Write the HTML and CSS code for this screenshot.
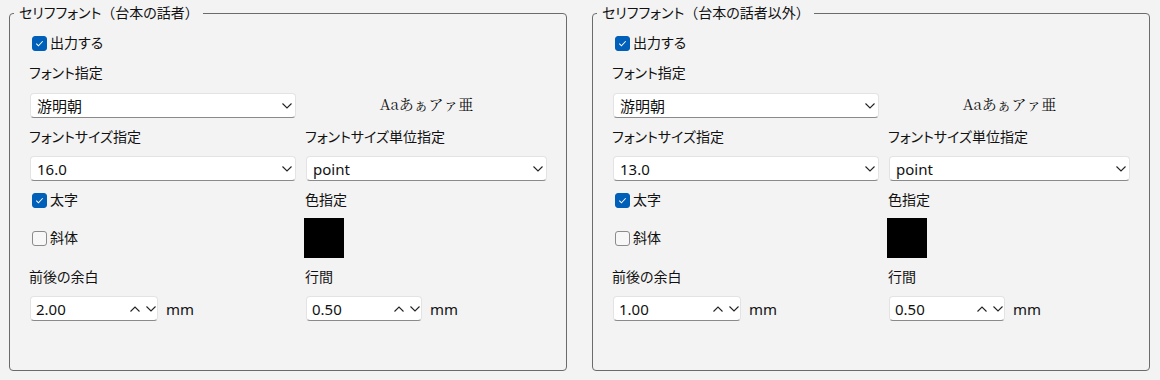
FILE: index.html
```html
<!DOCTYPE html>
<html lang="ja">
<head>
    <meta charset="UTF-8">
    <title>セリフフォント設定</title>
    <link rel="stylesheet" href="styles.css">
</head>
<body>
<div class="page">
    <fieldset class="group">
        <legend>セリフフォント<span class="fw">（</span>台本の話者<span class="fw">）</span></legend>
        <div class="form">
            <label class="check full"><span class="box on"><svg viewBox="0 0 15 15"><path d="M3.8 7.6 L6.3 10.1 L11.2 4.9"/></svg></span>出力する</label>
            <div class="label full">フォント指定</div>
            <div class="select"><span>游明朝</span><svg class="chev" viewBox="0 0 10 6"><path d="M0.5 0.5 L5 5 L9.5 0.5"/></svg></div>
            <div class="preview">Aaあぁアァ亜</div>
            <div class="label">フォントサイズ指定</div>
            <div class="label">フォントサイズ単位指定</div>
            <div class="select"><span>16.0</span><svg class="chev" viewBox="0 0 10 6"><path d="M0.5 0.5 L5 5 L9.5 0.5"/></svg></div>
            <div class="select"><span>point</span><svg class="chev" viewBox="0 0 10 6"><path d="M0.5 0.5 L5 5 L9.5 0.5"/></svg></div>
            <label class="check"><span class="box on"><svg viewBox="0 0 15 15"><path d="M3.8 7.6 L6.3 10.1 L11.2 4.9"/></svg></span>太字</label>
            <div class="label">色指定</div>
            <label class="check"><span class="box"></span>斜体</label>
            <div class="swatch"></div>
            <div class="label">前後の余白</div>
            <div class="label">行間</div>
            <div class="num-row">
                <div class="spin"><span>2.00</span><svg class="chev" viewBox="0 0 10 6"><path d="M0.5 5.5 L5 1 L9.5 5.5"/></svg><svg class="chev" viewBox="0 0 10 6"><path d="M0.5 0.5 L5 5 L9.5 0.5"/></svg></div>
                <span>mm</span>
            </div>
            <div class="num-row">
                <div class="spin short"><span>0.50</span><svg class="chev" viewBox="0 0 10 6"><path d="M0.5 5.5 L5 1 L9.5 5.5"/></svg><svg class="chev" viewBox="0 0 10 6"><path d="M0.5 0.5 L5 5 L9.5 0.5"/></svg></div>
                <span>mm</span>
            </div>
        </div>
    </fieldset>

    <fieldset class="group">
        <legend>セリフフォント<span class="fw">（</span>台本の話者以外<span class="fw">）</span></legend>
        <div class="form">
            <label class="check full"><span class="box on"><svg viewBox="0 0 15 15"><path d="M3.8 7.6 L6.3 10.1 L11.2 4.9"/></svg></span>出力する</label>
            <div class="label full">フォント指定</div>
            <div class="select"><span>游明朝</span><svg class="chev" viewBox="0 0 10 6"><path d="M0.5 0.5 L5 5 L9.5 0.5"/></svg></div>
            <div class="preview">Aaあぁアァ亜</div>
            <div class="label">フォントサイズ指定</div>
            <div class="label">フォントサイズ単位指定</div>
            <div class="select"><span>13.0</span><svg class="chev" viewBox="0 0 10 6"><path d="M0.5 0.5 L5 5 L9.5 0.5"/></svg></div>
            <div class="select"><span>point</span><svg class="chev" viewBox="0 0 10 6"><path d="M0.5 0.5 L5 5 L9.5 0.5"/></svg></div>
            <label class="check"><span class="box on"><svg viewBox="0 0 15 15"><path d="M3.8 7.6 L6.3 10.1 L11.2 4.9"/></svg></span>太字</label>
            <div class="label">色指定</div>
            <label class="check"><span class="box"></span>斜体</label>
            <div class="swatch"></div>
            <div class="label">前後の余白</div>
            <div class="label">行間</div>
            <div class="num-row">
                <div class="spin"><span>1.00</span><svg class="chev" viewBox="0 0 10 6"><path d="M0.5 5.5 L5 1 L9.5 5.5"/></svg><svg class="chev" viewBox="0 0 10 6"><path d="M0.5 0.5 L5 5 L9.5 0.5"/></svg></div>
                <span>mm</span>
            </div>
            <div class="num-row">
                <div class="spin short"><span>0.50</span><svg class="chev" viewBox="0 0 10 6"><path d="M0.5 5.5 L5 1 L9.5 5.5"/></svg><svg class="chev" viewBox="0 0 10 6"><path d="M0.5 0.5 L5 5 L9.5 0.5"/></svg></div>
                <span>mm</span>
            </div>
        </div>
    </fieldset>
</div>
</body>
</html>
```

FILE: styles.css
```css
* {
    margin: 0;
    padding: 0;
    box-sizing: border-box;
}

html, body {
    background: #f3f3f3;
}

body {
    font-family: "Noto Sans", "Noto Sans CJK JP", sans-serif;
    font-feature-settings: "palt";
    font-size: 14px;
    line-height: 20px;
    color: #111;
}

.page {
    display: flex;
    gap: 25px;
    padding: 3px 0 0 9px;
}

.group {
    width: 558px;
    height: 368px;
    border: 1px solid #6b6b6b;
    border-radius: 4px;
    padding: 5px 19px 0 20px;
}

.group legend {
    margin-left: -16px;
    padding: 0 4px 0 5px;
    line-height: 20px;
}

.fw {
    font-feature-settings: normal;
}

.form {
    display: grid;
    grid-template-columns: 266px 241px;
    grid-template-rows: 30px 30px 35px 28px 35px 28px 48px 30px 33px;
    column-gap: 10px;
    align-items: center;
}

.full {
    grid-column: 1 / 3;
}

.label {
    margin-left: -1px;
}

.check {
    display: flex;
    align-items: center;
    gap: 3px;
    margin-left: 2px;
}

.box {
    width: 15px;
    height: 15px;
    border: 1px solid #8b8b8b;
    border-radius: 3px;
    background: #f7f7f7;
    display: flex;
}

.box.on {
    background: #005fb8;
    border-color: #005fb8;
}

.box svg {
    width: 13px;
    height: 13px;
}

.box svg path {
    fill: none;
    stroke: #fff;
    stroke-width: 1.2;
}

.select {
    height: 25px;
    background: #fff;
    border: 1px solid #e3e3e3;
    border-bottom-color: #8a8a8a;
    border-radius: 4px;
    display: flex;
    align-items: center;
    justify-content: space-between;
    padding: 0 3px 0 6px;
    font-size: 15px;
}

.chev {
    width: 10px;
    height: 6px;
}

.chev path {
    fill: none;
    stroke: #222;
    stroke-width: 1.1;
}

.preview {
    text-align: center;
    font-family: "Noto Serif CJK JP", "Liberation Serif", "Noto Sans CJK JP", serif;
    font-feature-settings: normal;
    font-size: 15px;
    margin-top: -3px;
}

.swatch {
    width: 40px;
    height: 40px;
    background: #000;
    margin-left: -2px;
}

.num-row {
    display: flex;
    align-items: center;
    gap: 8px;
    font-size: 15px;
}

.spin {
    width: 128px;
    height: 25px;
    background: #fff;
    border: 1px solid #e3e3e3;
    border-bottom-color: #8a8a8a;
    border-radius: 4px;
    display: flex;
    align-items: center;
    gap: 6px;
    padding: 0 1px 0 5px;
}

.spin span {
    flex: 1;
}

.spin.short {
    width: 116px;
}
```
